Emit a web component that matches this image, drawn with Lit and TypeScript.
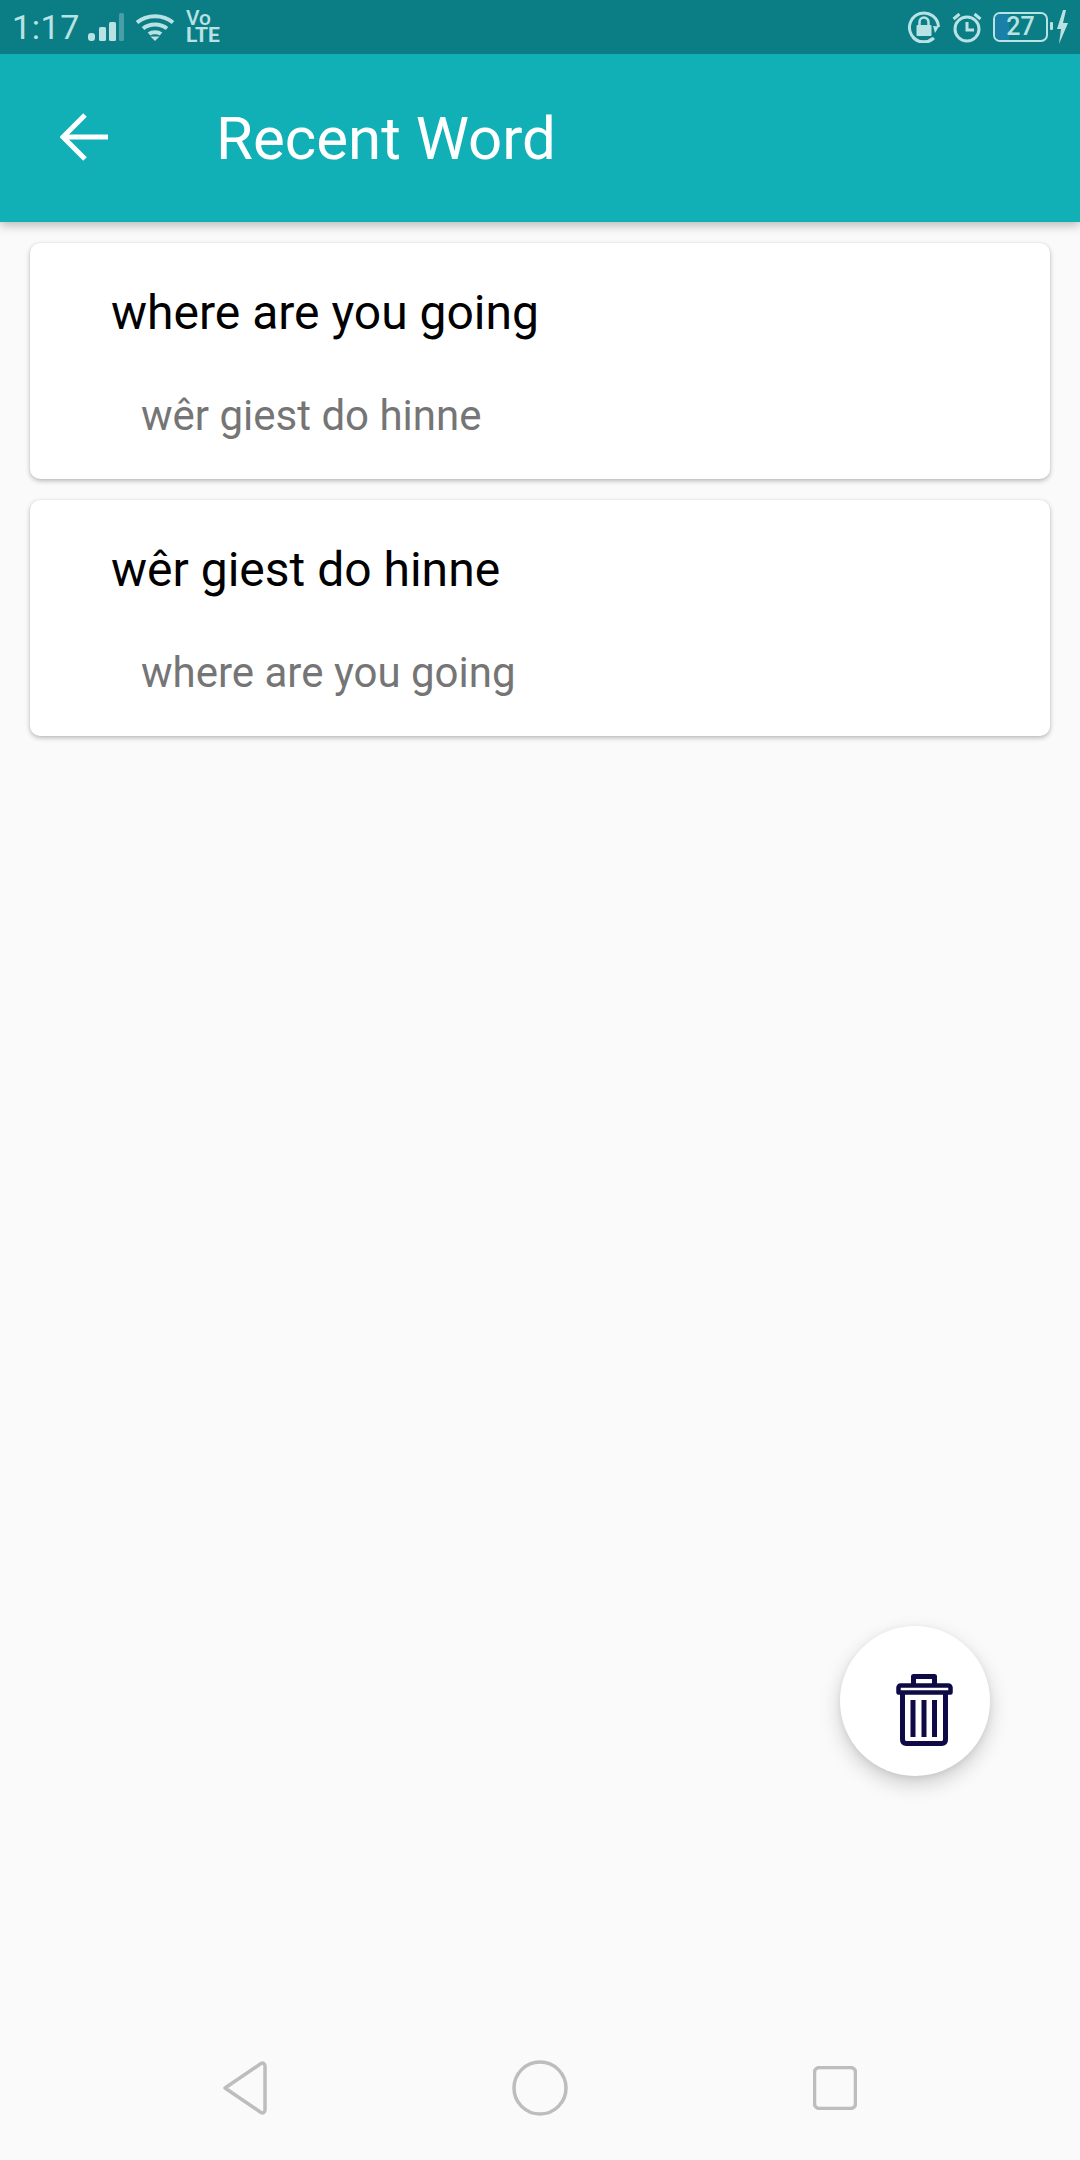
import { LitElement, html, css } from "lit";
import { customElement } from "lit/decorators.js";

const cards = [
  { word: "where are you going", tr: "wêr giest do hinne" },
  { word: "wêr giest do hinne", tr: "where are you going" },
];

@customElement("app-root")
export class AppRoot extends LitElement {
  static styles = css`
    :host { display: block; font-family: Roboto, "Noto Sans", sans-serif; }
    .page { position: relative; height: 2160px; width: 1080px; background: #fafafa; display: flex; flex-direction: column; overflow: hidden; }
    .status { height: 54px; flex: none; background: #0b7d84; color: #b9e2e4; display: flex; align-items: center; position: relative; z-index: 2; padding: 0 12px; box-sizing: border-box; }
    .time { font-size: 34px; line-height: 54px; letter-spacing: 0.6px; width: 76px; flex: none; }
    .status svg { display: block; flex: none; }
    .signal { margin-right: 11px; }
    .wifi { margin-right: 11px; }
    .volte { display: flex; flex-direction: column; font-weight: 700; width: 34px; flex: none; }
    .volte span { display: block; height: 17px; line-height: 17px; font-size: 21px; letter-spacing: 0; }
    .volte span:first-child { font-weight: 500; }
    .spacer { flex: 1; }
    .lock { margin-right: 12px; }
    .alarm { margin-right: 11px; }
    .battery { position: relative; width: 55px; height: 30px; box-sizing: border-box; border: 2px solid #b9e2e4; border-radius: 7px; overflow: hidden; text-align: center; font-size: 25px; line-height: 26px; margin-right: 2px; flex: none; }
    .battery i { position: absolute; left: 0; top: 0; bottom: 0; width: 27%; background: #1a80a8; }
    .battery b { position: relative; font-weight: 500; }
    .appbar { height: 168px; flex: none; background: #11b0b6; color: #fff; display: flex; align-items: center; box-shadow: 0 3px 10px rgba(0,0,0,.28); position: relative; z-index: 1; }
    .back { margin-left: 60px; margin-top: -2px; flex: none; }
    .title { margin-left: 108px; margin-top: 2px; font-size: 60px; font-weight: 400; line-height: 1; letter-spacing: 0; }
    .list { padding: 21px 30px 0; display: flex; flex-direction: column; gap: 21px; }
    .card { height: 236px; box-sizing: border-box; background: #fff; border-radius: 10px; box-shadow: 0 2px 5px rgba(0,0,0,.26), 0 0 2px rgba(0,0,0,.07); padding: 40px 0 0 81px; }
    .word { font-size: 48px; line-height: 60px; color: #000; }
    .tr { font-size: 42px; line-height: 56px; color: #757575; margin: 45px 0 0 30px; }
    .fab { position: absolute; left: 840px; top: 1626px; width: 150px; height: 150px; border-radius: 50%; background: #fff; box-shadow: 0 8px 20px rgba(0,0,0,.18), 0 2px 6px rgba(0,0,0,.07); }
    .fab svg { position: absolute; left: 54px; top: 46px; }
    .grow { flex: 1; }
    .nav { height: 100px; flex: none; margin-bottom: 22px; position: relative; display: flex; align-items: center; padding-left: 222px; }
    .nav svg { display: block; flex: none; }
    .n2 { margin-left: 244px; }
    .n3 { margin-left: 245px; }
  `;

  render() {
    return html`<div class="page">
      <div class="status">
        <span class="time">1:17</span>
        <svg class="signal" width="36" height="28" viewBox="0 0 36 28" fill="#b9e2e4">
          <rect x="0" y="20" width="7" height="8" rx="3"/><rect x="11" y="14" width="7" height="14" rx="1.500"/><rect x="21" y="9" width="7" height="19" rx="1.500"/><rect x="31" y="0" width="5" height="28" rx="1.500" opacity=".35"/>
        </svg>
        <svg class="wifi" width="40" height="28" viewBox="0 0 40 28" fill="none" stroke="#b9e2e4" stroke-width="4">
          <path d="M2 9.500C12 1 28 1 38 9.500"/><path d="M8 15.500C14.500 10 25.500 10 32 15.500"/><path d="M14 21C17 18.500 23 18.500 26 21"/><path d="M15.500 23.500 20 28 24.500 23.500 Z" fill="#b9e2e4" stroke="none"/>
        </svg>
        <div class="volte"><span>Vo</span><span>LTE</span></div>
        <span class="spacer"></span>
        <svg class="lock" width="32" height="32" viewBox="0 0 32 32" fill="none" stroke="#b9e2e4" stroke-width="3">
          <path d="M26 27A14.500 14.500 0 1 1 30.500 16"/><path d="M5 26.500A14.500 14.500 0 0 0 25 27.500" />
          <path d="M27 22 31 15.500 25 15Z" fill="#b9e2e4" stroke="none"/>
          <rect x="8.500" y="14" width="15" height="11" fill="#b9e2e4" stroke="none" rx="1"/><path d="M11.500 14V11a4.500 4.500 0 0 1 9 0v3" stroke-width="2.500"/>
        </svg>
        <svg class="alarm" width="30" height="32" viewBox="0 0 30 32" fill="none" stroke="#b9e2e4" stroke-width="3">
          <circle cx="15" cy="18" r="12"/><path d="M15 11v8h7"/><path d="M1.500 8 7.500 3M28.500 8 22.500 3"/>
        </svg>
        <div class="battery"><i></i><b>27</b></div>
        <svg width="18" height="34" viewBox="0 0 18 34" fill="#b9e2e4">
          <rect x="0" y="12" width="3" height="8" rx="1"/><path d="M13 0 7 19h4l-2 15 9-21h-5l3-13Z"/>
        </svg>
      </div>
      <div class="appbar">
        <svg class="back" width="48" height="48" viewBox="0 0 48 48" fill="none" stroke="#fff" stroke-width="5">
          <path d="M48 24H3M25 2 3 24l22 22"/>
        </svg>
        <div class="title">Recent Word</div>
      </div>
      <div class="list">
        ${cards.map(c => html`<div class="card"><div class="word">${c.word}</div><div class="tr">${c.tr}</div></div>`)}
      </div>
      <span class="grow"></span>
      <div class="nav">
        <svg width="46" height="54" viewBox="0 0 46 54" fill="none" stroke="#bdbdbd" stroke-width="3.500" stroke-linejoin="round">
          <path d="M3 27 39 2.500c2-1 4 0 4 2.500V49c0 2.500-2 3.500-4 2.500Z"/>
        </svg>
        <svg class="n2" width="56" height="56" viewBox="0 0 56 56" fill="none" stroke="#bdbdbd" stroke-width="3.500"><circle cx="28" cy="28" r="26"/></svg>
        <svg class="n3" width="44" height="44" viewBox="0 0 44 44" fill="none" stroke="#bdbdbd" stroke-width="3.500"><rect x="1.500" y="1.500" width="41" height="41" rx="5"/></svg>
      </div>
      <div class="fab">
        <svg width="60" height="76" viewBox="0 0 60 76" fill="none" stroke="#0d0a45" stroke-width="5" stroke-linejoin="round">
          <path d="M19.500 12V4.500h21V12"/>
          <path d="M4.500 20.500v-5c0-1 1-2 2-2h48c1 0 2 1 2 2v5Z" stroke-width="4.500"/>
          <path d="M8.500 22v45.500c0 2.500 1.500 4 4 4h35c2.500 0 4-1.500 4-4V22"/>
          <path d="M19 28v37M30 28v37M40.500 28v37"/>
        </svg>
      </div>
    </div>`;
  }
}
